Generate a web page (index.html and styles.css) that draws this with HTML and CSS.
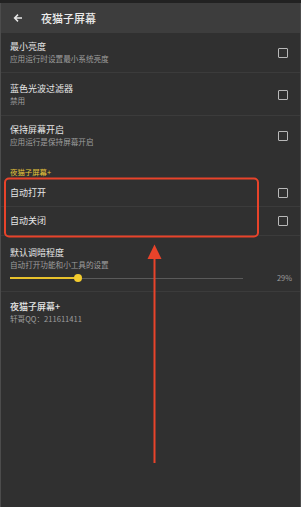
FILE: index.html
```html
<!DOCTYPE html>
<html lang="zh">
<head>
<meta charset="utf-8">
<link rel="stylesheet" href="styles.css">
</head>
<body>
<div class="screen">
  <div class="statusbar"></div>
  <div class="topbar">
    <svg class="back" width="10" height="10" viewBox="0 0 10 10"><path d="M9 5H1.8M5 1.6 1.6 5 5 8.4" fill="none" stroke="#e8e8e8" stroke-width="1.5"/></svg>
    <span class="title">夜猫子屏幕</span>
  </div>
  <div class="row row-a">
    <div class="texts"><div class="t">最小亮度</div><div class="s">应用运行时设置最小系统亮度</div></div>
    <span class="cb"></span>
  </div>
  <div class="row row-b">
    <div class="texts"><div class="t">蓝色光波过滤器</div><div class="s">禁用</div></div>
    <span class="cb"></span>
  </div>
  <div class="row row-c noline">
    <div class="texts"><div class="t">保持屏幕开启</div><div class="s">应用运行是保持屏幕开启</div></div>
    <span class="cb"></span>
  </div>
  <div class="section">夜猫子屏幕+</div>
  <div class="row row-d">
    <div class="texts"><div class="t">自动打开</div></div>
    <span class="cb"></span>
  </div>
  <div class="row row-e">
    <div class="texts"><div class="t">自动关闭</div></div>
    <span class="cb"></span>
  </div>
  <div class="slider-row">
    <div class="t">默认调暗程度</div>
    <div class="s">自动打开功能和小工具的设置</div>
    <div class="slider">
      <div class="track"><div class="fill" style="width:29%"></div><span class="thumb"></span></div>
      <span class="pct">29%</span>
    </div>
  </div>
  <div class="about">
    <div class="t">夜猫子屏幕+</div>
    <div class="s">轩哥QQ：211611411</div>
  </div>
  <svg class="annot" width="301" height="507" viewBox="0 0 301 507">
    <rect x="5" y="178.5" width="253" height="58" rx="4" ry="4" fill="none" stroke="#e8432a" stroke-width="2"/>
    <line x1="154.5" y1="254" x2="154.5" y2="463" stroke="#e8432a" stroke-width="2"/>
    <path d="M154.5 244.5 L147.5 259 L161.5 259 Z" fill="#e8432a"/>
  </svg>
</div>
</body>
</html>
```

FILE: styles.css
```css
* { box-sizing: border-box; margin: 0; padding: 0; }
html, body { width: 301px; height: 507px; overflow: hidden; background: #303030; }
body { font-family: "Noto Sans CJK SC", "Noto Sans", sans-serif; }
.screen {
  position: relative;
  width: 301px;
  height: 507px;
  background: #303030;
  border-left: 1px solid #4c4c4c;
  border-right: 1px solid #4c4c4c;
}
.statusbar { height: 3px; background: #222222; margin: 0 -1px; }
.topbar {
  height: 30px;
  background: #3d3d3d;
  display: flex;
  align-items: center;
  padding-left: 12px;
}
.back { display: block; }
.title {
  margin-left: 18px;
  color: #ececec;
  font-size: 11px;
  font-weight: 500;
  line-height: 14px;
}
.row {
  display: flex;
  align-items: center;
  justify-content: space-between;
  padding: 0 12px 0 9px;
  border-bottom: 1px solid #3b3b3b;
}
.row.noline { border-bottom: none; }
.row-a { height: 40px; padding-top: 1px; }
.row-b { height: 43px; padding-top: 1px; }
.row-c { height: 40px; }
.row-d { height: 28px; }
.row-e { height: 29px; }
.t {
  color: #e6e6e6;
  font-size: 9px;
  line-height: 12px;
}
.s {
  color: #9e9e9e;
  font-size: 7.6px;
  line-height: 12px;
}
.cb {
  width: 10px;
  height: 10px;
  border: 1.5px solid #b8b8b8;
  border-radius: 1px;
  flex: none;
}
.section {
  height: 23px;
  padding: 11px 0 0 9px;
  color: #e5c33a;
  font-size: 7.4px;
  line-height: 10px;
}
.slider-row {
  height: 56px;
  padding: 11px 0 0 9px;
  border-bottom: 1px solid #3b3b3b;
}
.slider-row .s { line-height: 11px; }
.slider {
  display: flex;
  align-items: center;
  height: 10px;
  margin-top: 3px;
}
.track {
  position: relative;
  width: 233px;
  height: 1px;
  background: #5a5a5a;
}
.fill {
  height: 2px;
  margin-top: -0.5px;
  background: #e8c22c;
}
.thumb {
  position: absolute;
  left: 64px;
  top: -3.5px;
  width: 8px;
  height: 8px;
  border-radius: 50%;
  background: #f3cb2e;
}
.pct {
  margin-left: auto;
  margin-right: 8px;
  color: #9e9e9e;
  font-size: 7.4px;
  line-height: 10px;
}
.about {
  padding: 9px 0 0 9px;
}
.about .t { font-weight: 500; }
.about .s { line-height: 11px; }
.annot {
  position: absolute;
  left: -1px;
  top: 0;
  pointer-events: none;
}
```
